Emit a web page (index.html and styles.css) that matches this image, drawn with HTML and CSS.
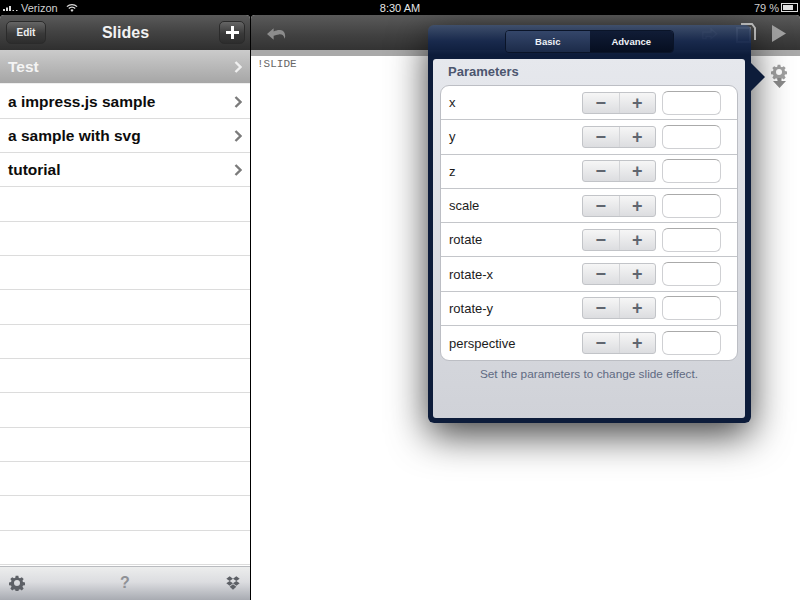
FILE: index.html
```html
<!DOCTYPE html>
<html lang="en">
<head>
    <meta charset="UTF-8">
    <title>Slides</title>
    <link rel="stylesheet" href="styles.css">
</head>
<body>
    <svg class="defs" width="0" height="0">
        <symbol id="gear" viewBox="0 0 24 24">
            <path fill-rule="evenodd" d="M10 1h4l.6 3.2 1.900.8 2.700-1.800 2.800 2.800-1.800 2.700.8 1.900 3 .6v4l-3 .6-.8 1.900 1.800 2.700-2.800 2.800-2.700-1.800-1.900.8-.6 3h-4l-.6-3-1.900-.8-2.700 1.800-2.800-2.800 1.800-2.700-.8-1.900-3-.6v-4l3-.6.8-1.900-1.800-2.700 2.800-2.800 2.700 1.800 1.900-.8zM12 7.500a4.500 4.500 0 1 0 0 9 4.500 4.500 0 0 0 0-9z"/>
        </symbol>
        <symbol id="dropbox" viewBox="0 0 24 24">
            <path d="M7 2l5 3.500L7 9 2 5.500zM17 2l5 3.500L17 9l-5-3.500zM7 9l5 3.500L7 16l-5-3.500zM17 9l5 3.500L17 16l-5-3.500zM7 17.500l5-3.500 5 3.500-5 4.500z"/>
        </symbol>
    </svg>

    <div class="statusbar">
        <div class="status-left">
            <svg class="signal" width="15" height="8" viewBox="0 0 15 8"><path d="M0 5h2v2H0zM3 3.500h2V7H3zM6 2h2v5H6zM9.500 6h1.500v1H9.500zM13 6h1.500v1H13z"/></svg>
            <span>Verizon</span>
            <svg class="wifi" width="12" height="10" viewBox="0 0 13 10"><path d="M1 3.500a8 8 0 0 1 11 0M3 5.600a5 5 0 0 1 7 0" fill="none" stroke="#ddd" stroke-width="1.400"/><path d="M4.800 7.200a2.500 2.500 0 0 1 3.400 0L6.500 9.200z" fill="#ddd"/></svg>
        </div>
        <div class="status-time">8:30 AM</div>
        <div class="status-right">
            <span>79 %</span>
            <span class="battery"><span class="battery-fill"></span></span>
        </div>
    </div>

    <div class="app">
        <aside class="sidebar">
            <header class="navbar">
                <button class="nav-btn edit-btn">Edit</button>
                <div class="nav-title">Slides</div>
                <button class="nav-btn add-btn">
                    <svg width="13" height="13" viewBox="0 0 13 13"><path d="M5 0h3v5h5v3H8v5H5V8H0V5h5z" fill="#fff"/></svg>
                </button>
            </header>
            <ul class="slide-list">
                <li class="slide-row selected"><span>Test</span><svg class="chev" width="8" height="12" viewBox="0 0 8 12"><path d="M1.500 1l5 5-5 5" fill="none" stroke="currentColor" stroke-width="2.400"/></svg></li>
                <li class="slide-row"><span>a impress.js sample</span><svg class="chev" width="8" height="12" viewBox="0 0 8 12"><path d="M1.500 1l5 5-5 5" fill="none" stroke="currentColor" stroke-width="2.400"/></svg></li>
                <li class="slide-row"><span>a sample with svg</span><svg class="chev" width="8" height="12" viewBox="0 0 8 12"><path d="M1.500 1l5 5-5 5" fill="none" stroke="currentColor" stroke-width="2.400"/></svg></li>
                <li class="slide-row"><span>tutorial</span><svg class="chev" width="8" height="12" viewBox="0 0 8 12"><path d="M1.500 1l5 5-5 5" fill="none" stroke="currentColor" stroke-width="2.400"/></svg></li>
                <li class="slide-row"></li>
                <li class="slide-row"></li>
                <li class="slide-row"></li>
                <li class="slide-row"></li>
                <li class="slide-row"></li>
                <li class="slide-row"></li>
                <li class="slide-row"></li>
                <li class="slide-row"></li>
                <li class="slide-row"></li>
                <li class="slide-row"></li>
                <li class="slide-row"></li>
            </ul>
            <footer class="sidebar-foot">
                <svg class="foot-icon" width="16" height="16"><use href="#gear"/></svg>
                <span class="help">?</span>
                <svg class="foot-icon" width="16" height="16"><use href="#dropbox"/></svg>
            </footer>
        </aside>

        <main class="editor">
            <div class="toolbar">
                <svg class="undo" width="19" height="16" viewBox="0 0 20 16"><path d="M0 9l7-6v3.500C12 4 18 4 19 10c.3 2 0 3-.5 4-.5-3.500-3-5-6-4.500-2 .2-4 .8-5.500 1.500v4z" fill="#8c8c8c"/></svg>
                <div class="toolbar-right">
                    <svg width="18" height="14" viewBox="0 0 22 16"><path d="M1 15V7h10V3l7 6-7 6v-3H5v3z" fill="none" stroke="#6d6d6d" stroke-width="1.500"/></svg>
                    <svg width="20" height="20" viewBox="0 0 20 20"><path d="M1 5h13v14H1z" fill="none" stroke="#8a8a8a" stroke-width="2"/><path d="M5 1h11l3 4v12" fill="none" stroke="#c8c8c8" stroke-width="2"/></svg>
                    <svg width="14" height="17" viewBox="0 0 14 17"><path d="M0 0l14 8.500L0 17z" fill="#a2a2a2"/></svg>
                </div>
            </div>
            <div class="toolbar-shadow"></div>
            <div class="editor-body">
                <pre class="source">!SLIDE</pre>
                <div class="side-tool">
                    <svg width="16" height="16" class="side-gear"><use href="#gear"/></svg>
                    <svg width="13" height="10" viewBox="0 0 13 10" class="side-drop"><path d="M4.500 0h4v3H13L6.500 10 0 3h4.500z"/></svg>
                </div>
            </div>
        </main>
    </div>

    <section class="popover">
        <div class="segments">
            <div class="segment seg-basic">Basic</div>
            <div class="segment seg-advance">Advance</div>
        </div>
        <div class="popover-arrow"></div>
        <div class="sheet">
            <h2 class="sheet-title">Parameters</h2>
            <div class="param-table">
                <div class="param-row"><span class="param-name">x</span><div class="stepper"><span class="step">&minus;</span><span class="step">+</span></div><input class="param-input"></div>
                <div class="param-row"><span class="param-name">y</span><div class="stepper"><span class="step">&minus;</span><span class="step">+</span></div><input class="param-input"></div>
                <div class="param-row"><span class="param-name">z</span><div class="stepper"><span class="step">&minus;</span><span class="step">+</span></div><input class="param-input"></div>
                <div class="param-row"><span class="param-name">scale</span><div class="stepper"><span class="step">&minus;</span><span class="step">+</span></div><input class="param-input"></div>
                <div class="param-row"><span class="param-name">rotate</span><div class="stepper"><span class="step">&minus;</span><span class="step">+</span></div><input class="param-input"></div>
                <div class="param-row"><span class="param-name">rotate-x</span><div class="stepper"><span class="step">&minus;</span><span class="step">+</span></div><input class="param-input"></div>
                <div class="param-row"><span class="param-name">rotate-y</span><div class="stepper"><span class="step">&minus;</span><span class="step">+</span></div><input class="param-input"></div>
                <div class="param-row"><span class="param-name">perspective</span><div class="stepper"><span class="step">&minus;</span><span class="step">+</span></div><input class="param-input"></div>
            </div>
            <p class="sheet-note">Set the parameters to change slide effect.</p>
        </div>
    </section>
</body>
</html>
```
FILE: styles.css
```css
* {
    box-sizing: border-box;
}
html, body {
    margin: 0;
    height: 100%;
}
body {
    width: 800px;
    height: 600px;
    overflow: hidden;
    background-color: #000;
    font-family: "Liberation Sans", Arial, sans-serif;
    position: relative;
    display: flex;
    flex-direction: column;
}
.defs {
    position: absolute;
}

/* status bar */
.statusbar {
    height: 15px;
    flex: none;
    display: flex;
    align-items: center;
    justify-content: space-between;
    padding: 0 2px 0 3px;
    font-size: 11px;
    color: #d0d0d0;
    position: relative;
}
.status-left {
    display: flex;
    align-items: center;
    gap: 3px;
}
.signal {
    fill: #ddd;
}
.wifi {
    margin-left: 5px;
}
.status-time {
    position: absolute;
    left: 0;
    right: 0;
    text-align: center;
    color: #e8e8e8;
}
.status-right {
    display: flex;
    align-items: center;
    gap: 2px;
}
.battery {
    width: 17px;
    height: 9px;
    border: 1px solid #ddd;
    padding: 1px;
    display: block;
}
.battery-fill {
    display: block;
    width: 80%;
    height: 100%;
    background-color: #ddd;
}

/* main layout */
.app {
    flex: 1;
    display: flex;
    gap: 1px;
    min-height: 0;
}
.sidebar {
    width: 250px;
    flex: none;
    display: flex;
    flex-direction: column;
    background-color: #fff;
    border-radius: 4px 4px 0 0;
    overflow: hidden;
}
.navbar {
    height: 35px;
    flex: none;
    display: grid;
    grid-template-columns: 1fr auto 1fr;
    align-items: center;
    padding: 0 5px 0 6px;
    background: linear-gradient(#5a5a5a, #444 45%, #2f2f2f);
}
.nav-title {
    color: #f2f2f2;
    font-size: 16px;
    font-weight: bold;
}
.nav-btn {
    height: 23px;
    border: 1px solid #2b2b2b;
    border-radius: 5px;
    background: linear-gradient(#666, #3a3a3a 55%, #2d2d2d);
    color: #eee;
    font-family: inherit;
    font-size: 10px;
    font-weight: bold;
    padding: 0;
    display: flex;
    align-items: center;
    justify-content: center;
}
.edit-btn {
    width: 40px;
}
.add-btn {
    width: 26px;
    justify-self: end;
}

/* slide list */
.slide-list {
    list-style: none;
    margin: 0;
    padding: 0;
    flex: 1;
    overflow: hidden;
}
.slide-row {
    height: 34.35px;
    display: flex;
    align-items: center;
    justify-content: space-between;
    padding: 1px 8px 0;
    border-bottom: 1px solid #dcdcdc;
    font-size: 15.500px;
    font-weight: bold;
    color: #0c0c0c;
}
.slide-row.selected {
    background: linear-gradient(#cbcbcb, #a6a6a6);
    color: #f4f4f4;
    border-bottom-color: #efefef;
}
.chev {
    color: #7b7b7b;
}
.selected .chev {
    color: #f0f0f0;
}
.sidebar-foot {
    height: 34px;
    flex: none;
    display: flex;
    align-items: center;
    justify-content: space-between;
    padding: 0 9px 2px 9px;
    border-top: 1px solid #b9bbbf;
    background: linear-gradient(#eceded, #dcdde0 45%, #a8abb2);
}
.foot-icon {
    fill: #5d6066;
}
.help {
    font-size: 16px;
    font-weight: bold;
    color: #8f9196;
}

/* editor side */
.editor {
    flex: 1;
    display: flex;
    flex-direction: column;
    background-color: #fff;
    border-radius: 4px 4px 0 0;
    overflow: hidden;
}
.toolbar {
    height: 35px;
    flex: none;
    display: flex;
    align-items: center;
    justify-content: space-between;
    padding: 1px 14px 0 16px;
    background: linear-gradient(#5a5a5a, #404040 60%, #333);
}
.toolbar-right {
    display: flex;
    align-items: center;
    gap: 16px;
}
.toolbar-shadow {
    height: 6px;
    flex: none;
    background-color: #a9a9a9;
}
.editor-body {
    flex: 1;
    display: flex;
    justify-content: space-between;
    padding: 2px 13px 0 6px;
}
.source {
    margin: 0;
    font-family: "Liberation Mono", "Courier New", monospace;
    font-size: 11px;
    color: #666;
}
.side-tool {
    margin-top: 6px;
    display: flex;
    flex-direction: column;
    align-items: center;
    height: 26px;
}
.side-gear {
    fill: #a0a0a0;
}
.side-drop {
    margin-top: -2px;
    fill: #8a8a8a;
}

/* popover */
.popover {
    position: absolute;
    left: 428px;
    top: 25px;
    width: 323px;
    height: 398px;
    padding: 34px 6px 5px 5px;
    border-radius: 6px;
    background: linear-gradient(rgba(60, 80, 115, 0.8) 0, rgba(22, 40, 78, 0.92) 16px, #0d1c3a 30px);
    box-shadow: 0 12px 38px rgba(0, 0, 0, 0.75);
}
.popover-arrow {
    position: absolute;
    right: -14px;
    top: 38px;
    border-left: 14px solid #0d1c3a;
    border-top: 14px solid transparent;
    border-bottom: 14px solid transparent;
}
.segments {
    position: absolute;
    left: 77px;
    top: 5px;
    width: 169px;
    height: 23px;
    display: flex;
    border: 1px solid #0a1428;
    border-radius: 4px;
    overflow: hidden;
}
.segment {
    flex: 1;
    display: flex;
    align-items: center;
    justify-content: center;
    font-size: 9.500px;
    font-weight: bold;
    color: #eef1f6;
}
.seg-basic {
    background: linear-gradient(#34466a, #1c2b49);
}
.seg-advance {
    background: linear-gradient(#101c36, #060e20);
}
.sheet {
    height: 100%;
    border-radius: 3px;
    background: linear-gradient(#e6e8ed, #d0d2d8);
    padding: 0 7px;
}
.sheet-title {
    margin: 0;
    height: 26px;
    padding: 5px 8px 0;
    font-size: 13px;
    font-weight: bold;
    color: #4c566f;
}
.param-table {
    background-color: #fff;
    border: 1px solid #bcbec4;
    border-radius: 9px;
}
.param-row {
    height: 34.300px;
    display: flex;
    align-items: center;
    padding: 0 16px 0 8px;
    border-bottom: 1px solid #c4c6ca;
}
.param-row:last-child {
    border-bottom: none;
}
.param-name {
    flex: 1;
    font-size: 13px;
    color: #1c1c1c;
}
.stepper {
    width: 74px;
    height: 22px;
    display: flex;
    border: 1px solid #c2c4c8;
    border-radius: 3px;
    background: linear-gradient(#f6f6f6, #dcdde0);
    margin-right: 6px;
}
.step {
    flex: 1;
    display: flex;
    align-items: center;
    justify-content: center;
    font-size: 18px;
    font-weight: bold;
    line-height: 1;
    color: #5f656f;
}
.step + .step {
    border-left: 1px solid #d4d5d8;
}
.param-input {
    width: 59px;
    height: 24px;
    border: 1px solid #cfd0d3;
    border-top: 1px solid #aaa;
    border-radius: 6px;
    background-color: #fff;
    padding: 0;
}
.sheet-note {
    margin: 6px 0 0;
    text-align: center;
    font-size: 11.800px;
    color: #5f6a82;
}
```
